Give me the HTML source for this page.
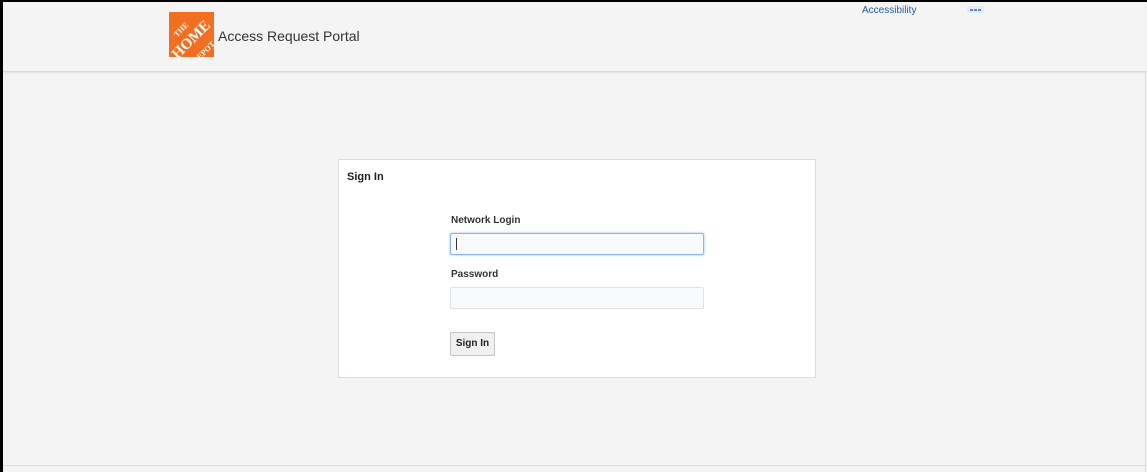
<!DOCTYPE html>
<html><head><style>
body{margin:0;width:1147px;height:472px;overflow:hidden;background:#f4f4f4;font-family:"Liberation Sans",sans-serif;position:relative}
.frame-l{position:absolute;left:0;top:0;width:3px;height:472px;background:#000}
.frame-t{position:absolute;left:0;top:0;width:1147px;height:2px;background:#000}
.hdr{position:absolute;left:3px;top:2px;width:1143px;height:69px;background:#f4f4f4;border-bottom:1px solid #d8d8d8;box-shadow:0 1px 2px rgba(0,0,0,.08)}
.logo{position:absolute;left:169px;top:12px;width:45px;height:45px;background:#f26f21;overflow:hidden}
.logo div{position:absolute;left:-8px;top:4px;width:61px;text-align:center;color:#fff;font-family:"Liberation Serif",serif;font-weight:bold;transform:rotate(-45deg);line-height:1}
.title{position:absolute;left:218px;top:28px;font-size:14px;color:#333}
.acc{position:absolute;left:862px;top:5px;font-size:10px;color:#1f5d99}
.dots{position:absolute;left:967px;top:6px;width:17px;height:7px;background:#e6ecf2}
.dots i{position:absolute;top:3px;width:3px;height:2px;background:#4a90d9}
.right{position:absolute;left:1145px;top:72px;width:1px;height:400px;background:#ddd}
.bot{position:absolute;left:3px;top:465px;width:1143px;height:1px;background:#ddd}
.card{position:absolute;left:338px;top:159px;width:476px;height:217px;background:#fff;border:1px solid #d8dde3}
.card h3{position:absolute;left:8px;top:11px;margin:0;font-size:11px;font-weight:bold;color:#222}
.lbl{position:absolute;left:112px;font-size:10px;font-weight:bold;color:#333}
.inp{position:absolute;left:111px;width:252px;height:20px;background:#f9fafb;border:1px solid #dde2e6;border-radius:2px}
.inp.f{border:1px solid #8ab7ea;box-shadow:0 0 2px #8ab7ea}
.caret{position:absolute;left:5px;top:4px;width:1px;height:12px;background:#333}
.btn{position:absolute;left:111px;top:172px;width:43px;height:22px;background:#f0f0f0;border:1px solid #c4c4c4;border-radius:2px;font-size:10px;font-weight:bold;color:#222;text-align:center;line-height:22px}
</style></head><body>
<div class="hdr"></div>
<div class="logo"><div><span style="font-size:8px">THE</span><br><span style="font-size:15px">HOME</span><br><span style="font-size:8px">DEPOT</span></div></div>
<div class="title">Access Request Portal</div>
<div class="acc">Accessibility</div>
<div class="dots"><i style="left:3px"></i><i style="left:7px"></i><i style="left:11px"></i></div>
<div class="frame-l"></div><div class="frame-t"></div>
<div class="right"></div><div class="bot"></div>
<div class="card">
<h3>Sign In</h3>
<div class="lbl" style="top:55px">Network Login</div>
<div class="inp f" style="top:73px"><div class="caret"></div></div>
<div class="lbl" style="top:109px">Password</div>
<div class="inp" style="top:127px"></div>
<div class="btn">Sign In</div>
</div>
</body></html>
